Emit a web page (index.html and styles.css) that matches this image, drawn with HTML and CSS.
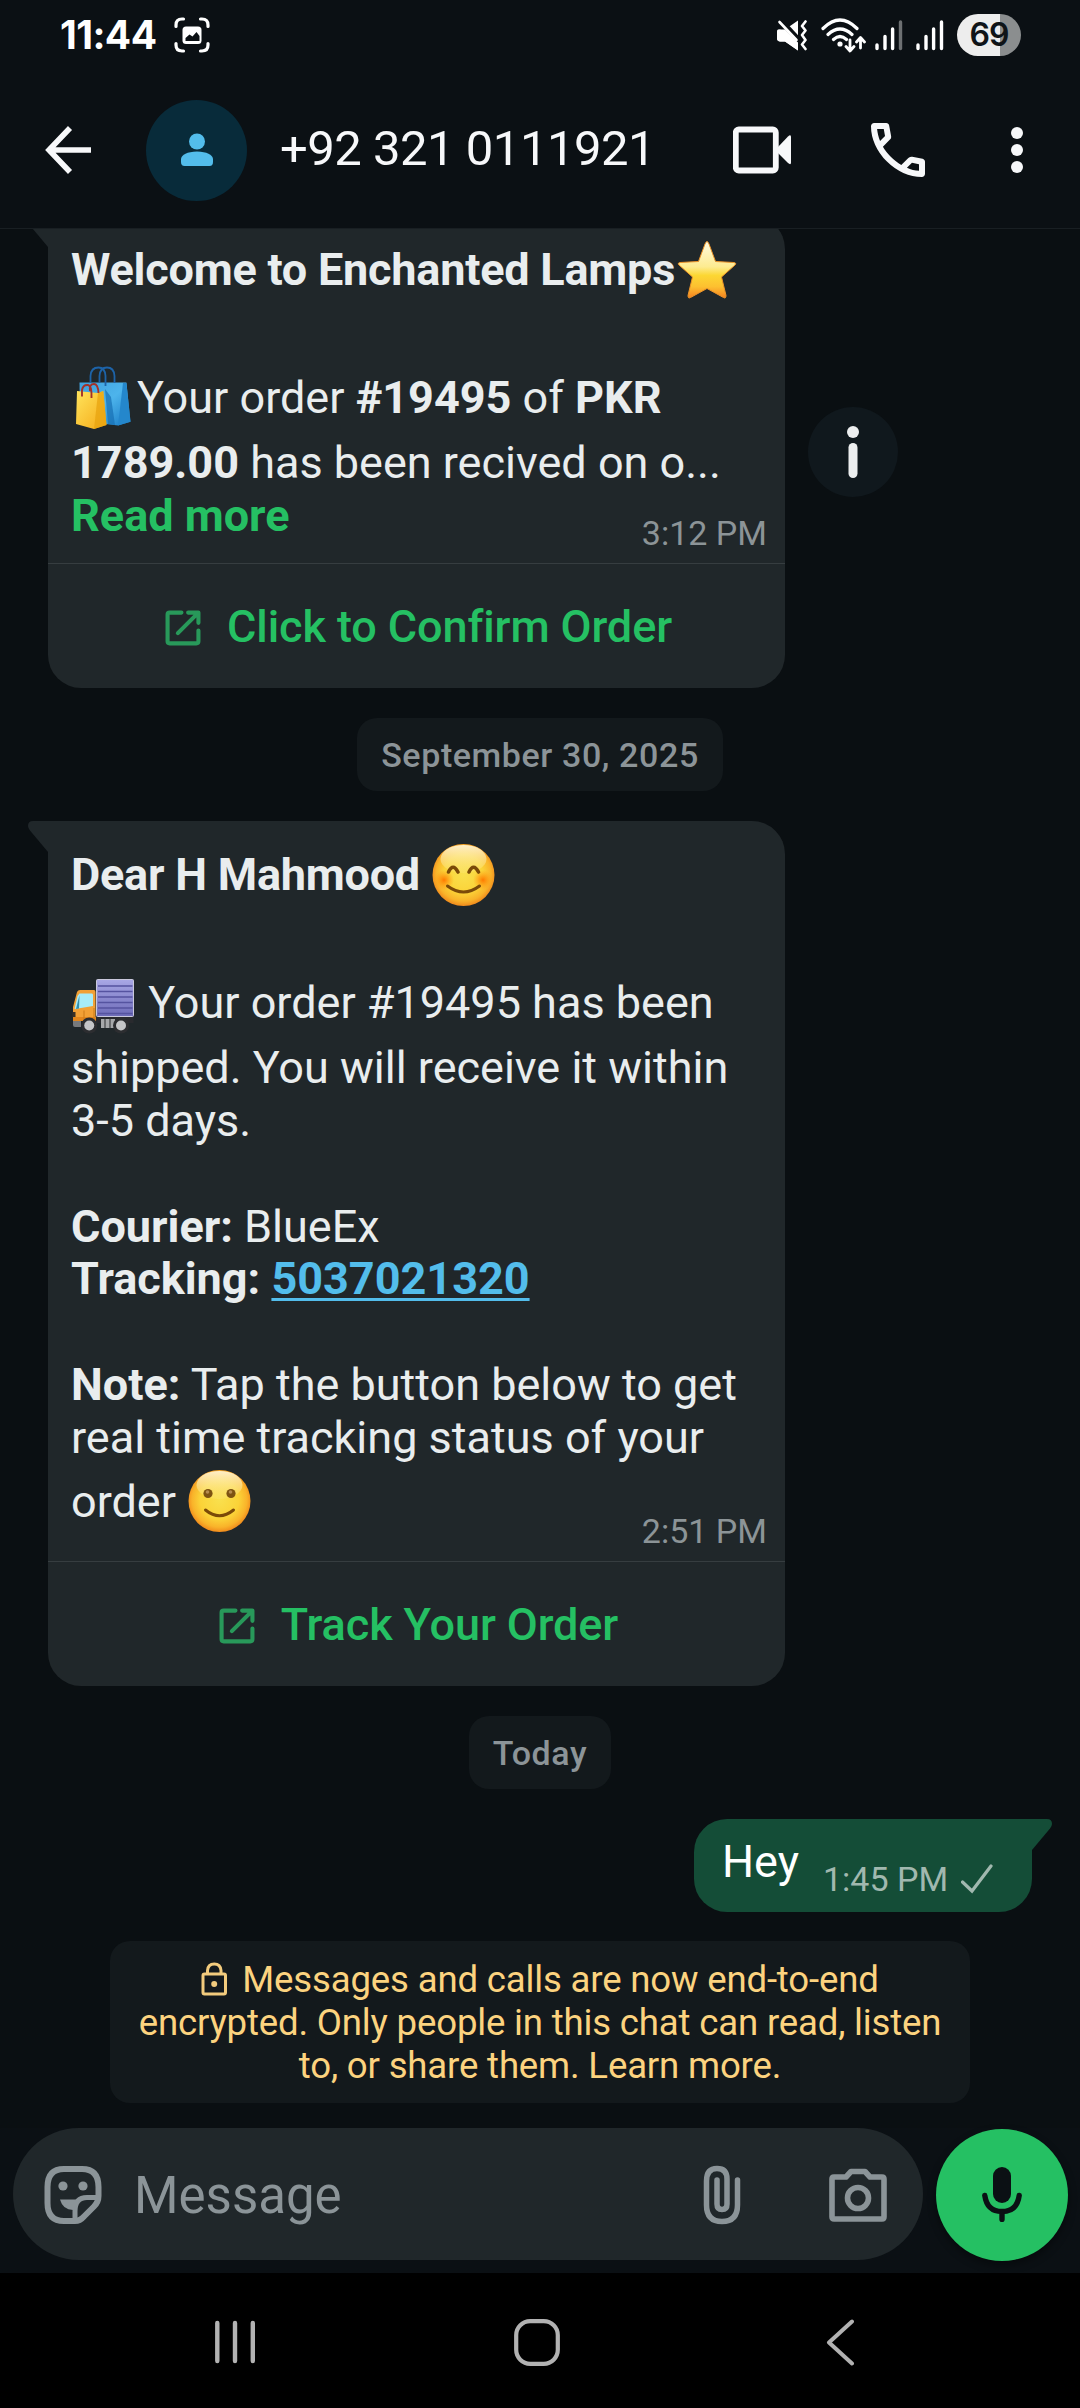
FILE: index.html
```html
<!DOCTYPE html>
<html lang="en">
<head>
<meta charset="utf-8">
<title>Chat</title>
<link rel="stylesheet" href="styles.css">
</head>
<body>
<svg class="defs" width="0" height="0" aria-hidden="true">
  <defs>
    <radialGradient id="face" cx="50%" cy="48%" r="52%"><stop offset="0" stop-color="#f9e04e"/><stop offset=".6" stop-color="#fbd338"/><stop offset=".85" stop-color="#f9b32a"/><stop offset="1" stop-color="#f08a1c"/></radialGradient>
    <linearGradient id="shine" x1="0" y1="0" x2="0" y2="1"><stop offset="0" stop-color="#fff3d2" stop-opacity=".95"/><stop offset="1" stop-color="#fdeb90" stop-opacity=".2"/></linearGradient>
    <radialGradient id="blush"><stop offset="0" stop-color="#ff7a00"/><stop offset="1" stop-color="#ff9a10" stop-opacity="0"/></radialGradient>
    <linearGradient id="star" x1="0" y1="0" x2="0" y2="1"><stop offset="0" stop-color="#fffbe0"/><stop offset=".45" stop-color="#fdeb90"/><stop offset=".6" stop-color="#fcd733"/><stop offset=".8" stop-color="#fdc030"/><stop offset="1" stop-color="#f58220"/></linearGradient>
    <linearGradient id="bagY" x1="0" y1="0" x2="1" y2="1"><stop offset="0" stop-color="#ffe45c"/><stop offset="1" stop-color="#f5a916"/></linearGradient>
    <linearGradient id="bagB" x1="0" y1="0" x2="1" y2="1"><stop offset="0" stop-color="#3fa0dc"/><stop offset=".5" stop-color="#4db4ec"/><stop offset="1" stop-color="#1779c4"/></linearGradient>
    <linearGradient id="cargo" x1="0" y1="0" x2="0" y2="1"><stop offset="0" stop-color="#a9a8e6"/><stop offset="1" stop-color="#6d6bb8"/></linearGradient>
    <symbol id="external" viewBox="0 0 35 35"><g fill="none" stroke="currentColor" stroke-width="4" stroke-linecap="round" stroke-linejoin="round"><path d="M16 2.500H4.500Q2.500 2.500 2.500 4.500V30.500Q2.500 32.500 4.500 32.500H30.500Q32.500 32.500 32.500 30.500V20"/><path d="M12.500 22.500 32 3M22.500 2.500H32.500V12.500"/></g></symbol>
  </defs>
</svg>
<div class="screen">
  <div class="status">
    <span class="clock">11:44</span>
    <svg class="capture" width="36" height="36" viewBox="0 0 36 36"><path d="M9.500 2H8Q2 2 2 8v1.500M26.500 2H28Q34 2 34 8v1.500M34 26.500V28Q34 34 28 34H26.500M2 26.500V28Q2 34 8 34H9.500" fill="none" stroke="#fff" stroke-width="3.200" stroke-linecap="round"/><rect x="8.500" y="9.500" width="19" height="17.500" rx="3.500" fill="#fff"/><path d="M11.500 24v-3l4-3.500 3 2 4-4.500 3 4v5z" fill="#0b1014"/></svg>
    <div class="signals">
      <svg width="30" height="31" viewBox="0 0 30 31"><path d="M1 9.500H8L21 0.500V30.500L8 21.500H3Q0 21 0 18V12Q0 9.500 1 9.500Z" fill="#fff"/><path d="M-1 -2 24 25" stroke="#0b1014" stroke-width="9"/><path d="M2.500 2 19.500 20" stroke="#fff" stroke-width="2.600" stroke-linecap="round"/><path d="M3 9.500h5l13 13v8L8 21.500H3Q0 21 0 18.500V12.500Q0 9.500 3 9.500z" fill="#fff"/><path d="M28.500 1.500 25 6l3.500 4.500L25 15l3.500 5L25 24.500l3.500 4.500" fill="none" stroke="#fff" stroke-width="2.600" stroke-linecap="round" stroke-linejoin="round"/></svg>
      <svg class="wifi" width="45" height="35" viewBox="0 0 45 35"><g fill="none" stroke="#fff" stroke-width="3.200" stroke-linecap="round"><path d="M2 10.500Q19 -6.500 36 10.500M7 16.500Q19 5.500 31 16.500M12.500 21.500Q19 15.500 25.500 21.500"/></g><circle cx="19" cy="26" r="2.600" fill="#fff"/><path d="M29 22v10M25 28.500l4 4.500 4-4.500M39.500 30V20.500M35.500 24l4-4.500 4 4.500" fill="none" stroke="#fff" stroke-width="2.800" stroke-linecap="round" stroke-linejoin="round"/></svg>
      <svg class="bars" width="28" height="31" viewBox="0 0 28 31" stroke="#fff" stroke-width="3.400" stroke-linecap="round"><path d="M2 25v3.500M10 16.500v12M17.600 9v19.500"/><path d="M25.500 2v26.500" stroke="#6d7072"/></svg>
      <svg class="bars" width="28" height="31" viewBox="0 0 28 31" stroke="#fff" stroke-width="3.400" stroke-linecap="round"><path d="M2 25v3.500M10 16.500v12M17.600 9v19.500M25.500 2v26.500"/></svg>
      <span class="battery">69</span>
    </div>
  </div>
  <header class="header">
    <svg class="back" width="48" height="48" viewBox="0 0 48 48" fill="none" stroke="#f7f8fa" stroke-width="5.600"><path d="M25 2 4 24 25 46M4 24H46"/></svg>
    <div class="avatar"><svg width="32" height="34" viewBox="0 0 32 34" fill="#53bdeb"><circle cx="16" cy="8.500" r="8"/><path d="M0 29v-3Q1 19 16 18.500 31 19 32 26v3Q32 33 28.500 33h-25Q0 33 0 29z"/></svg></div>
    <div class="name">+92 321 0111921</div>
    <svg class="video" width="58" height="48" viewBox="0 0 58 48"><rect x="2.800" y="3.500" width="40" height="41" rx="3" fill="none" stroke="#f7f8fa" stroke-width="5.800"/><path d="M45 21 55 10.500Q58 8 58 11V36.500Q58 39.500 55 37L45 27z" fill="#f7f8fa"/></svg>
    <svg class="call" width="54" height="54" viewBox="3 3 18 18" fill="#f7f8fa"><path d="M19.950 21q-3.125 0-6.175-1.362t-5.550-3.863-3.862-5.550T3 4.050q0-.45.3-.75t.75-.3H8.100q.35 0 .625.238t.325.562l.65 3.500q.05.4-.025.675T9.400 8.450L6.975 10.900q.5.925 1.187 1.787t1.513 1.663q.775.775 1.625 1.438T13.100 17l2.350-2.350q.225-.225.588-.337t.712-.063l3.450.7q.35.1.575.363T21 15.900v4.050q0 .45-.3.750t-.75.300M6.025 9l1.650-1.650L7.250 5H5.025q.125 1.025.35 2.025T6.025 9m8.950 8.950q.975.425 1.988.675T19 18.950v-2.200l-2.350-.475z"/></svg>
    <svg class="menu" width="12" height="48" viewBox="0 0 12 48" fill="#f7f8fa"><circle cx="6" cy="7" r="6"/><circle cx="6" cy="24" r="6"/><circle cx="6" cy="41" r="6"/></svg>
  </header>

  <main class="chat">
    <div class="row">
      <article class="bubble in">
        <svg class="tail" width="21" height="32" viewBox="0 0 21 32"><path d="M21 0H5Q0 0 0 5 0 7 2 9.500L20 31h1z" fill="#20272a"/></svg>
        <div class="text">
          <div class="line tall"><b class="title">Welcome to Enchanted Lamps</b><svg class="emoji" viewBox="0 0 66 66"><path d="M32 4.500Q33 4.500 34 7L40.500 24.500 59 25.500Q62 26 60 28L46.500 40 51 58.500Q51 62 48.500 60.500L32 51.500 15.500 60.500Q13 62 13 58.500L17.500 40 4 28Q2 26 5 25.500L23.500 24.500 30 7Q31 4.500 32 4.500Z" fill="url(#star)" stroke="#ee9428" stroke-width="1"/></svg></div>
          <div class="line"></div>
          <div class="line tall"><svg class="emoji" viewBox="0 0 66 66"><path d="M8.500 18.500H55.400L59.500 57.700 47 61.500 35 60 9 55z" fill="url(#bagB)"/><path d="M47 61.500 52 19h3.400l4.100 38.700z" fill="#2487cc"/><path d="M34 25 37 60 44 61 40 33z" fill="#176fb4" opacity=".7"/><path d="M19.500 19V12Q20 3.500 27.500 3.500 34 3.500 34.500 12v10M28.500 19V12Q29 3.500 36 3.500 43 3.500 43.500 12v7" fill="none" stroke="#1d63a8" stroke-width="1.800"/><path d="M6 27 27 29 32.300 27 35.500 61 23 65 5 60z" fill="url(#bagY)"/><path d="M27 29 32.300 27 35.500 61 23 65z" fill="#e8a410" opacity=".75"/><path d="M11 32.500V26Q12 20.500 17 21 21 21.500 20.500 34M19 27Q18 20 23 20 27 20 27.500 29" fill="none" stroke="#a33129" stroke-width="1.900"/></svg>Your order <b>#19495</b> of <b>PKR</b></div>
          <div class="line"><b>1789.00</b> has been recived on o...</div>
          <div class="line"><b class="more">Read more</b></div>
        </div>
        <div class="meta">3:12 PM</div>
        <div class="action"><svg class="ext"><use href="#external"/></svg><span>Click to Confirm Order</span></div>
      </article>
      <div class="info"><svg width="14" height="54" viewBox="0 0 14 54" fill="#eceeef"><circle cx="7" cy="7" r="6"/><rect x="2.500" y="18" width="9" height="35" rx="4.500"/></svg></div>
    </div>

    <div class="chip">September 30, 2025</div>

    <article class="bubble in">
      <svg class="tail" width="21" height="32" viewBox="0 0 21 32"><path d="M21 0H5Q0 0 0 5 0 7 2 9.500L20 31h1z" fill="#20272a"/></svg>
      <div class="text">
        <div class="line tall"><b class="title">Dear H Mahmood</b> <svg class="emoji" viewBox="0 0 66 66"><circle cx="32.500" cy="33" r="31" fill="url(#face)"/><ellipse cx="32.500" cy="17" rx="23" ry="14" fill="url(#shine)"/><circle cx="13" cy="38" r="10" fill="url(#blush)"/><circle cx="52" cy="38" r="10" fill="url(#blush)"/><g fill="none" stroke="#7b4a08" stroke-linecap="round"><path d="M17.500 30Q22 20.500 27 30M38 30Q42.500 20.500 47.500 30" stroke-width="3.600"/><path d="M16.500 44Q32.500 56 48.500 44" stroke-width="3"/></g></svg></div>
        <div class="line"></div>
        <div class="line tall"><svg class="emoji" viewBox="0 0 66 66"><rect x="25" y="45" width="37.500" height="8" fill="#292a2e"/><path d="M2 50h8v7H4Q2 57 2 55z" fill="#77797c"/><path d="M30 49h14v9H30z" fill="#a6a8aa"/><path d="M34 49v9M39 49v9" stroke="#55575a" stroke-width="1.500"/><rect x="25.500" y="9.500" width="37" height="37" rx="1" fill="url(#cargo)" stroke="#c9c8dc"/><path d="M27 16h34.500M27 21.500h34.500M27 27h34.500M27 32.500h34.500M27 38h34.500M27 43.500h34.500" stroke="#5553a0" stroke-width="1.300"/><path d="M9 20H23Q24.500 20 24.500 22V50H2V37L6 22Q7 20 9 20z" fill="#f2a035"/><path d="M2 47h23v4H2z" fill="#e2861c"/><path d="M8.500 23.500H21Q22 23.500 22 25v11l-12 2-6.500 1 3-13z" fill="#a7ecf8"/><path d="M8.500 25 5 39l3-.5z" fill="#348fac"/><path d="M13 40.500V49M23 38v11" stroke="#cc7a18" stroke-width="1"/><rect x="1.500" y="42" width="3" height="5" fill="#3a3025"/><circle cx="18.200" cy="55.500" r="8" fill="#2c2d30"/><circle cx="50" cy="55.500" r="8" fill="#2c2d30"/><circle cx="18.200" cy="55.500" r="5" fill="#c4c5c7"/><circle cx="50" cy="55.500" r="5" fill="#c4c5c7"/></svg> Your order #19495 has been</div>
        <div class="line">shipped. You will receive it within</div>
        <div class="line">3-5 days.</div>
        <div class="line"></div>
        <div class="line"><b>Courier:</b> BlueEx</div>
        <div class="line"><b>Tracking: <a class="link">5037021320</a></b></div>
        <div class="line"></div>
        <div class="line"><b>Note:</b> Tap the button below to get</div>
        <div class="line">real time tracking status of your</div>
        <div class="line tall last">order <svg class="emoji" viewBox="0 0 66 66"><circle cx="32.500" cy="33" r="31" fill="url(#face)"/><ellipse cx="32.500" cy="17" rx="23" ry="14" fill="url(#shine)"/><circle cx="21" cy="25.500" r="4.600" fill="#7d5312"/><circle cx="44" cy="25.500" r="4.600" fill="#7d5312"/><circle cx="20.500" cy="24" r="1.800" fill="#b58b50"/><circle cx="43.500" cy="24" r="1.800" fill="#b58b50"/><path d="M18.500 42Q32.500 53.500 46.500 42" fill="none" stroke="#7b4a08" stroke-width="3" stroke-linecap="round"/></svg></div>
      </div>
      <div class="meta">2:51 PM</div>
      <div class="action"><svg class="ext"><use href="#external"/></svg><span>Track Your Order</span></div>
    </article>

    <div class="chip">Today</div>

    <article class="bubble out">
      <svg class="tail" width="21" height="32" viewBox="0 0 21 32"><path d="M0 0h16Q21 0 21 5 21 7 19 9.500L1 31H0z" fill="#144d37"/></svg>
      <span class="hey">Hey</span>
      <span class="sent">1:45 PM</span>
      <svg class="check" width="32" height="30" viewBox="0 0 32 30"><path d="M1.500 18 11 27 30 2" fill="none" stroke="#a1b8af" stroke-width="3.200" stroke-linecap="round"/></svg>
    </article>

    <div class="notice"><svg class="lock" width="27" height="34" viewBox="0 0 27 34"><rect x="2" y="12" width="22.500" height="20" rx="1.500" fill="none" stroke="#f2cb7d" stroke-width="3"/><path d="M6.500 12V8.500Q7 2 13.250 2 19.500 2 20 8.500V12" fill="none" stroke="#f2cb7d" stroke-width="3"/><circle cx="13.200" cy="22" r="3" fill="#f2cb7d"/></svg>Messages and calls are now end-to-end<br>encrypted. Only people in this chat can read, listen<br>to, or share them. Learn more.</div>
  </main>

  <footer class="composer">
    <div class="field">
      <svg width="58" height="60" viewBox="0 0 58 60"><path d="M54.500 31V22Q54.500 4 38 4H20Q3.500 4 3.500 22V38Q3.500 56 20 56H31Q36 56 40 51.500L50 41.500Q54.500 37 54.500 31Z" fill="none" stroke="#8b9498" stroke-width="6"/><path d="M31 57V46Q31 32.500 43 32.500H55" fill="none" stroke="#8b9498" stroke-width="5"/><circle cx="19" cy="21" r="4.600" fill="#8b9498"/><circle cx="39" cy="21" r="4.600" fill="#8b9498"/><path d="M16 34.500H36L30 45Q19 45.500 16 34.500z" fill="#8b9498"/></svg>
      <span class="placeholder">Message</span>
      <svg class="clip" width="38" height="60" viewBox="0 0 38 60"><path d="M34.500 15V40Q34.500 56.500 19 56.500 3.500 56.500 3.500 40V16Q3.500 3.500 14 3.500 24 3.500 24 14V39Q24 44.500 19 44.500 14 44.500 14 39V15" fill="none" stroke="#8b9498" stroke-width="5.500" stroke-linecap="round"/></svg>
      <svg class="camera" width="58" height="54" viewBox="0 0 58 54" fill="none" stroke="#8b9498" stroke-width="5.600" stroke-linejoin="round"><path d="M5 9H17L22 3.500H36L41 9H53Q55 9 55 11V49Q55 51 53 51H5Q3 51 3 49V11Q3 9 5 9z"/><circle cx="29" cy="30" r="10.500"/></svg>
    </div>
    <div class="mic"><svg width="40" height="56" viewBox="0 0 40 56"><rect x="11" y="1" width="18" height="36" rx="9" fill="#0b1014"/><path d="M2.800 29.500Q5 45.500 20 45.500 35 45.500 37.200 29.500M20 46v7.500" fill="none" stroke="#0b1014" stroke-width="5.400" stroke-linecap="round"/></svg></div>
  </footer>

  <nav class="nav">
    <svg class="recents" width="40" height="44" viewBox="0 0 40 44" stroke="#b2b2b2" stroke-width="4.400" stroke-linecap="round"><path d="M2.300 3v38M20 3v38M37.800 3v38"/></svg>
    <svg class="home" width="46" height="47" viewBox="0 0 46 47"><rect x="2.200" y="2.200" width="41.600" height="42.600" rx="14" fill="none" stroke="#b2b2b2" stroke-width="4.200"/></svg>
    <svg class="prev" width="28" height="47" viewBox="0 0 28 47"><path d="M26 2.500 3 23.500 26 44.500" fill="none" stroke="#b2b2b2" stroke-width="4" stroke-linecap="round" stroke-linejoin="round"/></svg>
  </nav>
</div>
</body>
</html>
```
FILE: styles.css
```css
* { box-sizing: border-box; }
body { margin: 0; background: #0b1014; font-family: Roboto, "Liberation Sans", sans-serif; }
svg { flex: none; }
.defs { position: absolute; }
.screen { width: 1080px; height: 2408px; display: flex; flex-direction: column; background: #0b1014; overflow: hidden; }

.status { height: 72px; flex: none; display: flex; align-items: center; padding: 0 59px 2px 60px; }
.clock { color: #fff; font: 700 39px/40px Inter, Roboto, sans-serif; width: 114px; letter-spacing: -.6px; }
.signals { margin-left: auto; display: flex; align-items: center; }
.wifi { margin-left: 14px; }
.bars { margin-left: 9px; }
.bars + .bars { margin-left: 13px; }
.battery { margin-left: 13px; width: 64px; height: 42px; border-radius: 21px; background: linear-gradient(90deg, #ededed 43px, #8b8e8f 43px); color: #0f1418; font: 600 32px/42px Inter, Roboto, sans-serif; letter-spacing: -1px; text-align: center; }

.header { height: 157px; flex: none; display: flex; align-items: center; padding-left: 45px; border-bottom: 1px solid #191f23; }
.avatar { width: 101px; height: 101px; border-radius: 50%; background: #082b3a; display: flex; align-items: center; justify-content: center; margin-left: 53px; }
.name { margin-left: 33px; width: 453px; color: #f7f8fa; font-size: 49px; line-height: 56px; letter-spacing: -.5px; white-space: nowrap; padding-bottom: 2px; }
.call { margin-left: 80px; }
.menu { margin-left: 86px; }

.chat { height: 1899px; flex: none; overflow: hidden; background: #0a0f12; display: flex; flex-direction: column; align-items: flex-start; }
.row { display: flex; align-items: center; gap: 23px; margin-top: -13px; }
.bubble { position: relative; background: #20272a; color: #e9edee; }
.in { margin-left: 48px; width: 737px; border-radius: 0 33px 33px 33px; padding-top: 17px; }
.tail { position: absolute; top: 0; }
.in .tail { left: -20px; }
.out .tail { right: -20px; }
.text { padding: 0 23px; font-size: 45px; white-space: nowrap; }
.line { height: 52.8px; line-height: 54px; }
.tall { height: 75px; line-height: 73px; }
.last { line-height: 75px; }
.title { letter-spacing: -.22px; }
.emoji { width: 66px; height: 66px; vertical-align: -17.5px; }
.more { color: #25c063; }
.link { color: #53bdeb; text-decoration: underline; text-decoration-thickness: 2.5px; text-underline-offset: 4px; }
.meta { margin: -28px 18px 10px 0; text-align: right; height: 40px; font-size: 34px; line-height: 40px; color: #8c9497; }
.action { height: 125px; border-top: 1px solid #363d40; display: flex; align-items: center; justify-content: center; gap: 26px; padding: 1px 0 0 4px; color: #25c063; font-size: 45px; font-weight: 500; letter-spacing: -.1px; }
.ext { width: 36px; height: 36px; color: #28995a; margin-top: 3px; }
.info { width: 90px; height: 90px; border-radius: 50%; background: #10181d; display: flex; align-items: center; justify-content: center; }
.chip { align-self: center; margin: 30px 0; height: 73px; padding: 0 24px; border-radius: 20px; background: #13191c; color: #8c9498; font-size: 34px; font-weight: 500; line-height: 74px; letter-spacing: .6px; }
.out { align-self: flex-end; margin-right: 48px; width: 338px; height: 93px; border-radius: 33px 0 33px 33px; background: #144d37; display: flex; align-items: center; padding-left: 28px; }
.hey { font-size: 45px; line-height: 52px; color: #fff; padding-bottom: 7px; width: 101px; }
.sent { font-size: 34px; line-height: 40px; color: #a1b8af; padding-top: 27px; width: 138px; }
.check { margin-top: 27px; }
.notice { align-self: center; margin-top: 29px; width: 860px; height: 162px; border-radius: 20px; background: #13191c; color: #fcd37f; font-size: 36.6px; letter-spacing: -.17px; line-height: 43px; padding-top: 17px; text-align: center; white-space: nowrap; }
.lock { vertical-align: -4px; margin-right: 14px; }

.composer { height: 145px; flex: none; display: flex; gap: 13px; padding-left: 13px; }
.field { width: 910px; height: 132px; border-radius: 66px; background: #20272a; display: flex; align-items: center; padding: 1px 36px 0 31px; }
.placeholder { margin-left: 32px; flex: 1; color: #8b9498; font-size: 51px; line-height: 60px; padding-top: 3px; }
.camera { margin-left: 88px; }
.mic { width: 132px; height: 132px; margin-top: 1px; padding-bottom: 3px; border-radius: 50%; background: #25c063; box-shadow: 0 4px 8px rgba(0, 0, 0, .4); display: flex; align-items: center; justify-content: center; }

.nav { flex: 1; background: #000; display: flex; align-items: flex-start; padding: 46px 0 0 215px; }
.recents { margin-top: 1px; }
.home { margin-left: 259px; }
.prev { margin-left: 266px; }
```
